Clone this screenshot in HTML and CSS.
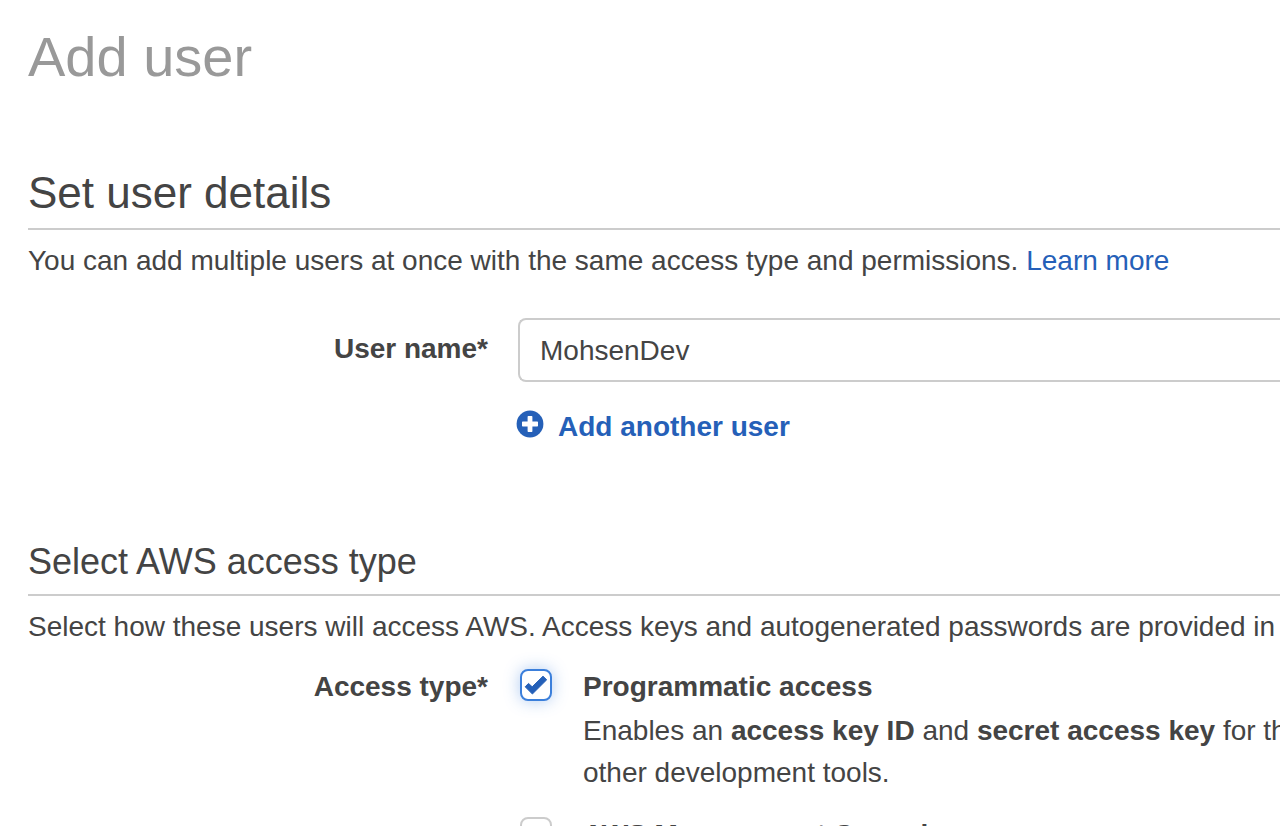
FILE: index.html
```html
<!DOCTYPE html>
<html lang="en">
<head>
<meta charset="utf-8">
<title>Add user</title>
<link rel="stylesheet" href="styles.css">
</head>
<body>
<main class="page">
  <h1 class="page-title">Add user</h1>

  <section class="details">
    <h2 class="section-title">Set user details</h2>
    <p class="intro">You can add multiple users at once with the same access type and permissions. <a class="link" href="#">Learn more</a></p>
    <div class="form-row">
      <label class="form-label form-label-input" for="user-name">User name*</label>
      <div class="form-field">
        <input class="text-input" id="user-name" type="text" value="MohsenDev">
        <button class="add-button" type="button">
          <svg class="add-icon" viewBox="0 0 28 28" aria-hidden="true">
            <circle cx="14" cy="14" r="13.4" fill="currentColor"/>
            <path d="M12.3 6H15.7Q16.4 6 16.4 6.7V11.6H21.3Q22 11.6 22 12.3V15.7Q22 16.4 21.3 16.4H16.4V21.3Q16.4 22 15.7 22H12.3Q11.6 22 11.6 21.3V16.4H6.7Q6 16.4 6 15.7V12.3Q6 11.6 6.7 11.6H11.6V6.7Q11.6 6 12.3 6Z" fill="#fff"/>
          </svg>
          <span>Add another user</span>
        </button>
      </div>
    </div>
  </section>

  <section class="access">
    <h3 class="subsection-title">Select AWS access type</h3>
    <p class="intro">Select how these users will access AWS. Access keys and autogenerated passwords are provided in the last step.</p>
    <div class="form-row" role="group" aria-labelledby="access-label">
      <span class="form-label" id="access-label">Access type*</span>
      <div class="options">
        <div class="option">
          <span class="check">
            <input class="check-box" id="programmatic" type="checkbox" checked>
            <svg class="check-mark" viewBox="0 0 32 32" aria-hidden="true">
              <path d="M5.2 17.8L8.5 14.4L12.2 17.8L23 7.2L26.7 10.8L12.4 25Z" fill="#2560b8" stroke="#2560b8" stroke-width="1" stroke-linejoin="round"/>
            </svg>
          </span>
          <div>
            <label class="option-title" for="programmatic">Programmatic access</label>
            <p class="option-text">Enables an <b>access key ID</b> and <b>secret access key</b> for the AWS API, CLI, SDK, and<br>other development tools.</p>
          </div>
        </div>
        <div class="option">
          <span class="check">
            <input class="check-box" id="console" type="checkbox">
          </span>
          <label class="option-title" for="console">AWS Management Console access</label>
        </div>
      </div>
    </div>
  </section>
</main>
</body>
</html>
```
FILE: styles.css
```css
* {
  box-sizing: border-box;
}

body {
  margin: 0;
  height: 100vh;
  overflow: hidden;
  background: #fff;
  color: #444;
  font: 28px/42px "Helvetica Neue", Helvetica, "Liberation Sans", Arial, sans-serif;
}

h1, h2, h3, p {
  margin: 0;
  font-weight: 400;
}

.page {
  padding: 25px 0 0 28px;
  white-space: nowrap;
}

.page-title {
  color: #999;
  font-size: 56px;
  line-height: 64px;
}

.details {
  margin-top: 78px;
}

.access {
  margin-top: 93px;
}

.section-title,
.subsection-title {
  border-bottom: 2px solid #ccc;
}

.section-title {
  padding-bottom: 9px;
  font-size: 44px;
  line-height: 52px;
}

.subsection-title {
  padding-bottom: 11px;
  font-size: 36px;
}

.intro {
  padding-top: 10px;
}

.link {
  color: #2560b8;
  text-decoration: none;
}

.form-row {
  display: grid;
  grid-template-columns: 460px minmax(0, 1fr);
  column-gap: 30px;
}

.details .form-row {
  margin-top: 36px;
}

.access .form-row {
  margin-top: 18px;
}

.form-label {
  font-weight: 700;
  text-align: right;
}

.form-label-input {
  padding-top: 10px;
}

.form-field {
  display: flex;
  flex-direction: column;
  align-items: flex-start;
  gap: 24px;
}

.text-input {
  width: 100%;
  height: 64px;
  padding: 2px 20px 0;
  border: 2px solid #ccc;
  border-right: 0;
  border-radius: 8px 0 0 8px;
  outline: 0;
  background: #fff;
  color: #444;
  font: inherit;
}

.add-button {
  display: flex;
  align-items: flex-start;
  gap: 14px;
  margin-left: -2px;
  padding: 0;
  border: 0;
  background: none;
  color: #2560b8;
  font: inherit;
  font-weight: 700;
}

.add-icon {
  width: 28px;
  height: 28px;
  margin-top: 4px;
}

.options {
  display: grid;
  row-gap: 20px;
  padding-left: 2px;
}

.option {
  display: grid;
  grid-template-columns: 32px minmax(0, 1fr);
  column-gap: 31px;
}

.check {
  display: grid;
  height: 32px;
  margin-top: 3px;
}

.check-box,
.check-mark {
  grid-area: 1 / 1;
  width: 32px;
  height: 32px;
  margin: 0;
}

.check-box {
  appearance: none;
  border: 2px solid #ccc;
  border-radius: 8px;
  background: #fff;
}

.check-box:checked {
  border-color: #3b7fdb;
  box-shadow: 0 0 16px rgba(59, 127, 219, 0.4);
}

.check-mark {
  pointer-events: none;
}

.option-title {
  display: block;
  font-weight: 700;
}

.option-text {
  padding-top: 2px;
}
```
